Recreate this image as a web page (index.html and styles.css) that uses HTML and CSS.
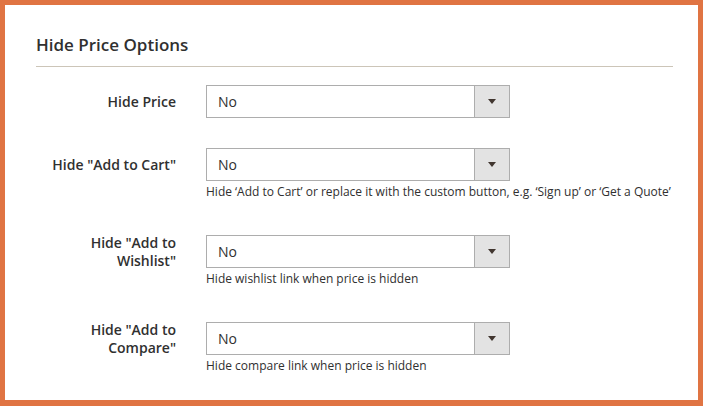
FILE: index.html
```html
<!DOCTYPE html>
<html>
<head>
<meta charset="utf-8">
<link rel="stylesheet" href="styles.css">
</head>
<body>
<div class="frame">
  <div class="section">
    <div class="title">Hide Price Options</div>
    <div class="rows">
      <div class="row">
        <div class="label">Hide Price</div>
        <div class="control">
          <div class="select"><span class="value">No</span><span class="btn"><span class="arrow"></span></span></div>
        </div>
      </div>
      <div class="row">
        <div class="label">Hide "Add to Cart"</div>
        <div class="control">
          <div class="select"><span class="value">No</span><span class="btn"><span class="arrow"></span></span></div>
        </div>
        <div class="note">Hide ‘Add to Cart’ or replace it with the custom button, e.g. ‘Sign up’ or ‘Get a Quote’</div>
      </div>
      <div class="row">
        <div class="label">Hide "Add to Wishlist"</div>
        <div class="control">
          <div class="select"><span class="value">No</span><span class="btn"><span class="arrow"></span></span></div>
        </div>
        <div class="note">Hide wishlist link when price is hidden</div>
      </div>
      <div class="row">
        <div class="label">Hide "Add to Compare"</div>
        <div class="control">
          <div class="select"><span class="value">No</span><span class="btn"><span class="arrow"></span></span></div>
        </div>
        <div class="note">Hide compare link when price is hidden</div>
      </div>
    </div>
  </div>
</div>
</body>
</html>
```

FILE: styles.css
```css
html, body {
  margin: 0;
  padding: 0;
}
body {
  font-family: "Open Sans", "Liberation Sans", sans-serif;
  color: #303030;
  background: #ffffff;
}
.frame {
  width: 703px;
  height: 406px;
  box-sizing: border-box;
  border: 5px solid #e07443;
  border-bottom-width: 6px;
  background: #ffffff;
  overflow: hidden;
}
.section {
  padding: 0 25px 0 31px;
}
.title {
  font-size: 17px;
  font-weight: 560;
  line-height: 22px;
  padding-top: 29px;
  padding-bottom: 10px;
  border-bottom: 1px solid #ccc5b8;
  color: #303030;
}
.rows {
  padding-top: 18px;
}
.row {
  display: grid;
  grid-template-columns: 140px 304px;
  column-gap: 30px;
  margin-bottom: 30px;
}
.label {
  grid-column: 1;
  grid-row: 1;
  align-self: center;
  text-align: right;
  font-size: 14px;
  font-weight: 560;
  line-height: 18px;
  margin: -4px 0;
}
.control {
  grid-column: 2;
  grid-row: 1;
}
.note {
  grid-column: 2;
  grid-row: 2;
  font-size: 12px;
  line-height: 16px;
  margin-top: 3px;
  margin-bottom: 5px;
  white-space: nowrap;
}
.select {
  display: flex;
  height: 33px;
  box-sizing: border-box;
  border: 1px solid #adadad;
  background: #ffffff;
}
.value {
  flex: 1;
  font-size: 14px;
  line-height: 31px;
  padding-left: 11px;
}
.btn {
  width: 34px;
  border-left: 1px solid #adadad;
  background: #e3e3e3;
  display: flex;
  align-items: center;
  justify-content: center;
}
.arrow {
  width: 0;
  height: 0;
  border-left: 4px solid transparent;
  border-right: 4px solid transparent;
  border-top: 5px solid #41362f;
}
```
